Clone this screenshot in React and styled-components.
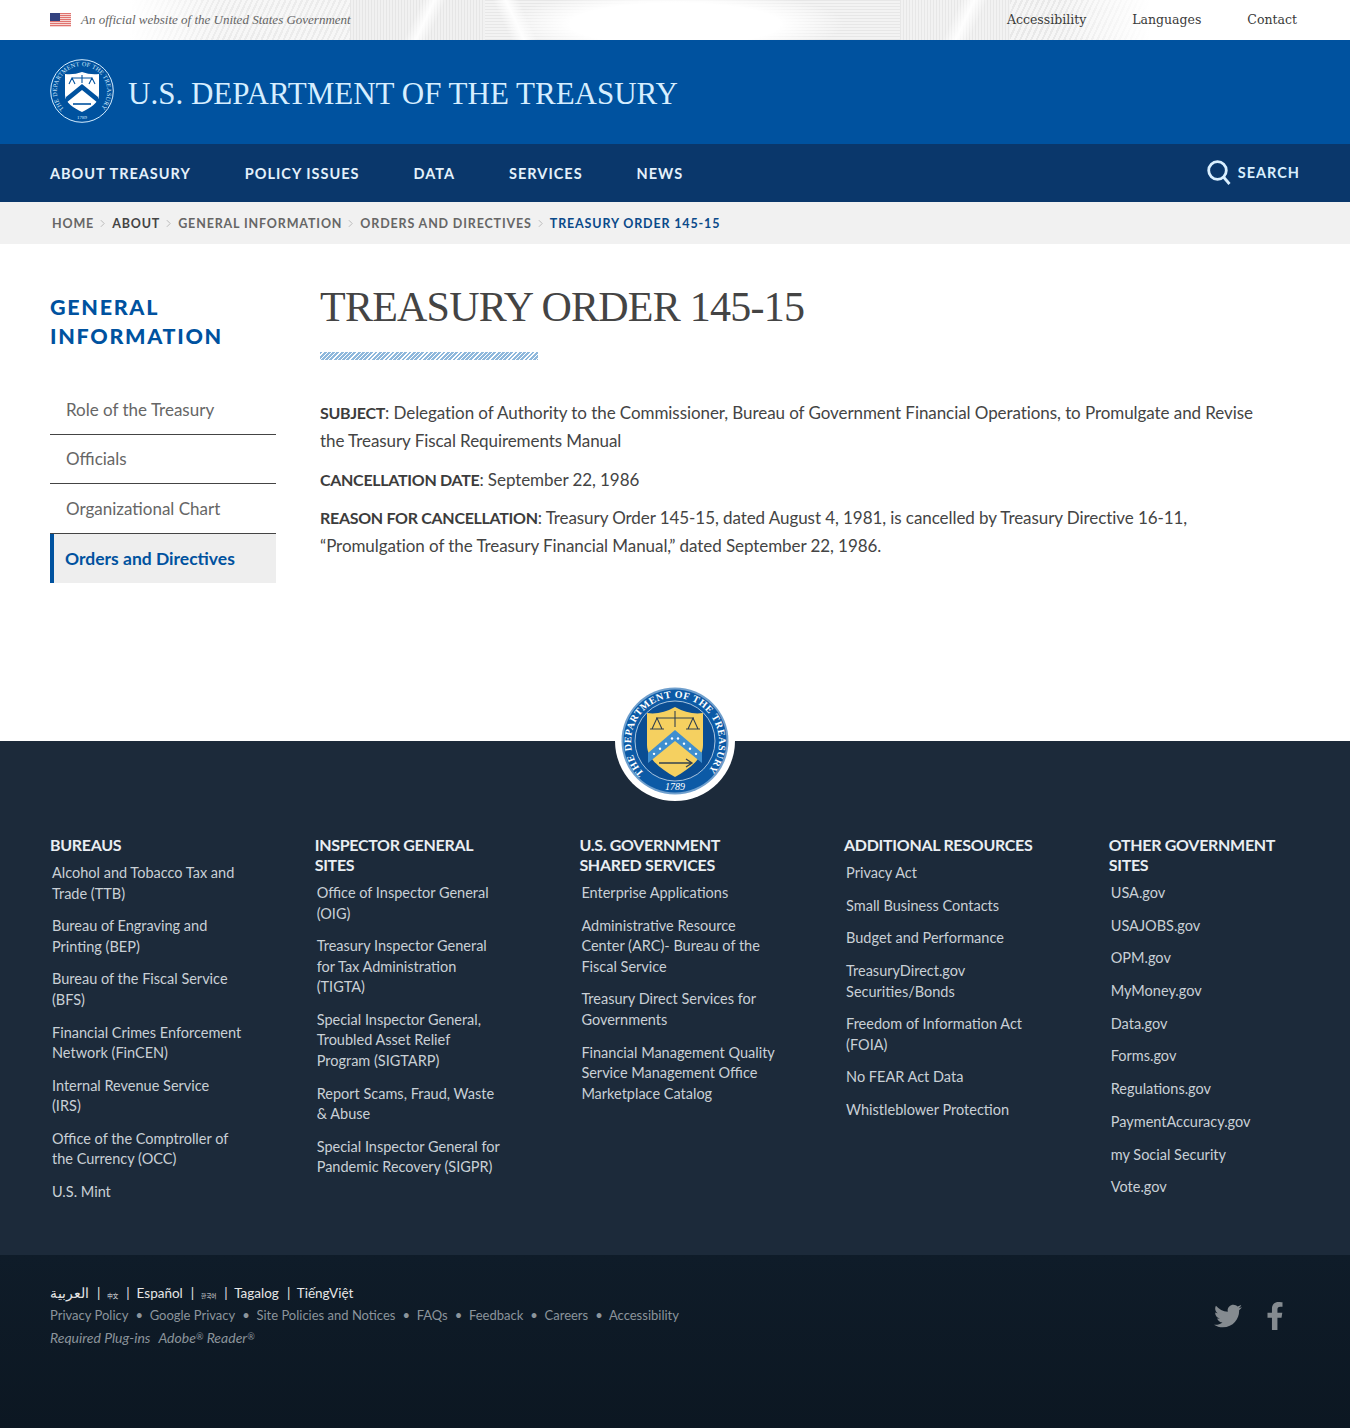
import styled, { createGlobalStyle } from "styled-components";
import { FaTwitter, FaFacebookF } from "react-icons/fa";

const sans = `"Lato", "Open Sans", sans-serif`;
const serif = `"Liberation Serif", serif`;

const GlobalStyle = createGlobalStyle`
    * {
        box-sizing: border-box;
    }

    body {
        margin: 0;
        background: #ffffff;
        color: #444444;
        font-family: ${sans};
    }

    a {
        color: inherit;
        text-decoration: none;
    }

    ul {
        list-style: none;
        margin: 0;
        padding: 0;
    }
`;

const TopBar = styled.div`
    height: 40px;
    padding: 0 53px 0 50px;
    display: flex;
    justify-content: space-between;
    align-items: center;
    background-color: #ffffff;
    background-repeat: no-repeat;
    background-image:
        radial-gradient(ellipse 170px 34px at 50% 60%, #ffffff 62%, rgba(255, 255, 255, 0) 100%),
        linear-gradient(115deg, rgba(255, 255, 255, 0) 35%, rgba(255, 255, 255, 0.95) 50%, rgba(255, 255, 255, 0) 65%),
        linear-gradient(65deg, rgba(255, 255, 255, 0) 35%, rgba(255, 255, 255, 0.95) 50%, rgba(255, 255, 255, 0) 65%),
        linear-gradient(115deg, rgba(255, 255, 255, 0) 35%, rgba(255, 255, 255, 0.95) 50%, rgba(255, 255, 255, 0) 65%),
        linear-gradient(90deg, #ffffff, rgba(255, 255, 255, 0)),
        linear-gradient(270deg, #ffffff, rgba(255, 255, 255, 0)),
        repeating-linear-gradient(90deg, #e6e6e6 0 1px, #f1f1f1 1px 3px),
        repeating-linear-gradient(0deg, #e7e7e7 0 1px, #f3f3f3 1px 3px),
        repeating-linear-gradient(90deg, #e7e7e7 0 1px, #f2f2f2 1px 3px),
        repeating-linear-gradient(115deg, #e9e9e9 0 2px, #f6f6f6 2px 5px),
        repeating-linear-gradient(115deg, #ececec 0 2px, #f7f7f7 2px 5px);
    background-size:
        100% 100%,
        60px 40px,
        70px 40px,
        70px 40px,
        90px 40px,
        90px 40px,
        135px 40px,
        415px 40px,
        110px 40px,
        140px 40px,
        220px 40px;
    background-position:
        0 0,
        395px 0,
        480px 0,
        930px 0,
        130px 0,
        1060px 0,
        350px 0,
        485px 0,
        900px 0,
        1010px 0,
        130px 0;
`;

const Official = styled.div`
    display: flex;
    align-items: center;
    gap: 10px;
    font: italic 13px ${serif};
    color: #666666;
`;

const TopLinks = styled.nav`
    display: flex;
    gap: 46px;
    padding-bottom: 2px;
    font: 12.5px "DejaVu Serif", serif;
    color: #3a3a3a;
`;

const Masthead = styled.header`
    height: 104px;
    padding: 0 50px 3px;
    background: #00529f;
    display: flex;
    align-items: center;
    gap: 14px;
`;

const SiteName = styled.a`
    font: 31px ${serif};
    color: #d6eeff;
    padding-top: 7px;
    white-space: nowrap;
`;

const MainNav = styled.nav`
    height: 58px;
    padding: 0 50px 2px;
    background: #0a376b;
    display: flex;
    justify-content: space-between;
    align-items: center;
`;

const NavList = styled.ul`
    display: flex;
    gap: 54px;
`;

const NavLink = styled.a`
    font-size: 14.5px;
    font-weight: 700;
    letter-spacing: 1px;
    color: #e4f1fb;
    white-space: nowrap;
`;

const SearchButton = styled.a`
    display: flex;
    align-items: center;
    gap: 7px;
    color: #d9efff;
    font-size: 14.5px;
    font-weight: 700;
    letter-spacing: 1px;
`;

const Breadcrumbs = styled.ol`
    height: 42px;
    margin: 0;
    padding: 0 52px;
    list-style: none;
    background: #f1f1f1;
    display: flex;
    align-items: center;
    font-size: 12.5px;
    font-weight: 700;
    letter-spacing: 0.85px;
    text-transform: uppercase;
`;

const Crumb = styled.li`
    display: flex;
    align-items: center;
    color: ${({ $tone }) => $tone || "#666666"};
    white-space: nowrap;
`;

const CrumbArrow = styled.svg`
    width: 5px;
    height: 9px;
    margin: 0 7px 0 6px;
    fill: none;
    stroke: #bbbbbb;
    stroke-width: 1.2;
`;

const Main = styled.main`
    height: 497px;
    padding: 35px 50px 0;
    display: grid;
    grid-template-columns: 226px 1fr;
    column-gap: 44px;
`;

const SideTitle = styled.h2`
    margin: 14px 0 34px;
    font-size: 21.5px;
    line-height: 29px;
    font-weight: 900;
    letter-spacing: 1.7px;
    text-transform: uppercase;
    color: #00529f;
`;

const SideItem = styled.li`
    height: ${({ $active }) => ($active ? "49px" : "49.5px")};
    display: flex;
    align-items: center;
    padding-left: ${({ $active }) => ($active ? "11px" : "16px")};
    font-size: ${({ $active }) => ($active ? "17.5px" : "17px")};
    font-weight: ${({ $active }) => ($active ? 700 : 400)};
    color: ${({ $active }) => ($active ? "#00529f" : "#666666")};
    background: ${({ $active }) => ($active ? "#eeeeee" : "transparent")};
    border-left: ${({ $active }) => ($active ? "4px solid #00529f" : "0")};
    border-bottom: ${({ $active }) => ($active ? "0" : "1px solid #444444")};
`;

const Title = styled.h1`
    margin: 0;
    font: 42px/56px ${serif};
    letter-spacing: -0.76px;
    color: #444444;
    text-transform: uppercase;
`;

const TitleRule = styled.div`
    width: 218px;
    height: 8px;
    margin: 17px 0 39px;
    background: repeating-linear-gradient(135deg, #8fb8dc 0 2px, #ffffff 2px 3px);
`;

const Para = styled.p`
    max-width: 958px;
    margin: 0 0 10.5px;
    font-size: 17px;
    line-height: 28px;
    letter-spacing: -0.07px;
    color: #444444;

    strong {
        font-size: 16px;
        letter-spacing: -0.3px;
        color: #3c3c3c;
    }
`;

const SealHolder = styled.div`
    position: absolute;
    left: 50%;
    top: -60px;
    width: 120px;
    height: 120px;
    margin-left: -60px;
    border-radius: 50%;
    background: #ffffff;
    display: flex;
    align-items: center;
    justify-content: center;
`;

const FooterTop = styled.footer`
    position: relative;
    height: 514px;
    padding: 94px 0 0 50px;
    background: #1c2a3a;
    display: grid;
    grid-template-columns: repeat(5, 264.7px);
`;

const ColTitle = styled.h3`
    width: 200px;
    margin: 0;
    font-size: 16px;
    line-height: 20px;
    font-weight: 700;
    letter-spacing: -0.3px;
    color: #e9eef2;
`;

const ColList = styled.ul`
    width: 200px;
    margin-left: 2px;
`;

const ColItem = styled.li`
    font-size: 14.5px;
    line-height: 20.5px;
    white-space: pre-line;
    color: #c9d0d6;
    padding-top: 8px;
    margin-bottom: 4.2px;
`;

const FooterBottom = styled.div`
    height: 173px;
    padding: 27px 50px 0;
    background: linear-gradient(#0f1c29, #0c1722);
    display: flex;
    justify-content: space-between;
`;

const Row = styled.div`
    height: 22px;
    display: flex;
    align-items: center;
    gap: ${({ $gap }) => $gap};
    font-size: ${({ $size }) => $size};
    font-style: ${({ $italic }) => ($italic ? "italic" : "normal")};
    color: ${({ $light }) => ($light ? "#e6e6e6" : "#8b949b")};
    white-space: nowrap;
`;

const TinyLang = styled.span`
    font-family: "Noto Sans CJK KR", sans-serif;
    font-size: 5.5px;
`;

const Reg = styled.span`
    font-size: 9px;
    vertical-align: 3px;
`;

const Socials = styled.div`
    display: flex;
    align-items: center;
    gap: 19px;
    height: 68px;
    margin-right: 11px;
    color: #858b90;
`;

const Flag = () => (
    <svg width="21" height="15" viewBox="0 0 21 15">
        <rect width="21" height="15" fill="#ffffff" />
        {[0, 2, 4, 6, 8, 10, 12].map((y) => (
            <rect key={y} y={y} width="21" height="1.3" fill="#e0736f" />
        ))}
        <rect width="10" height="8" fill="#33427f" />
    </svg>
);

const SmallSeal = () => (
    <svg width="64" height="64" viewBox="0 0 64 64">
        <defs>
            <path id="small-ring" d="M14 50 A25.2 25.2 0 1 1 50 50" />
        </defs>
        <circle cx="32" cy="32" r="31.3" fill="none" stroke="#d6eeff" strokeWidth="1" />
        <text fontSize="6.2" fill="#d6eeff" fontFamily="Liberation Serif, serif">
            <textPath href="#small-ring" textLength="116">THE DEPARTMENT OF THE TREASURY</textPath>
        </text>
        <text x="32" y="60" textAnchor="middle" fontSize="5" fill="#d6eeff" fontFamily="Liberation Serif, serif">1789</text>
        <path d="M15 15 q9 1 17 -2 q8 3 17 2 v21 c0 8 -9 13 -17 17 c-8 -4 -17 -9 -17 -17 z" fill="#ffffff" />
        <path d="M16 38 L32 25 L48 38 L48 44 L32 31 L16 44 Z" fill="#00529f" />
        <path d="M22 19 h20 M32 16 v8 M19 25 l3 -6 l3 6 M39 25 l3 -6 l3 6" stroke="#00529f" strokeWidth="1.1" fill="none" />
        <path d="M23 45 h18" stroke="#00529f" strokeWidth="1.6" />
    </svg>
);

const BigSeal = () => (
    <svg width="108" height="108" viewBox="0 0 108 108">
        <defs>
            <path id="big-ring" d="M23 86 A44 44 0 1 1 85 86" />
        </defs>
        <circle cx="54" cy="54" r="53.5" fill="#6f9fcd" />
        <circle cx="54" cy="54" r="51.5" fill="#0c5aa6" />
        <circle cx="54" cy="54" r="40" fill="#0a4d93" stroke="#cfe0ef" strokeWidth="0.8" />
        <text fontSize="10" fill="#ffffff" fontFamily="Liberation Serif, serif" fontWeight="700">
            <textPath href="#big-ring" textLength="204">THE DEPARTMENT OF THE TREASURY</textPath>
        </text>
        <text x="54" y="103" textAnchor="middle" fontSize="10" fontStyle="italic" fill="#ffffff" fontFamily="Liberation Serif, serif">1789</text>
        <path d="M26 26 q14 2 28 -6 q14 8 28 6 v32 c0 14 -14 24 -28 32 c-14 -8 -28 -18 -28 -32 z" fill="#f5d060" />
        <path d="M27 66 L54 43 L81 66 L81 76 L54 54 L27 76 Z" fill="#3f8fd0" />
        {[33, 39, 45, 51, 57, 63, 69, 75].map((x) => (
            <circle key={x} cx={x} cy={49 + Math.abs(x - 54) * 0.85} r="1.2" fill="#ffffff" />
        ))}
        <path d="M35 31 h38 M54 24 v16 M31 42 l5 -11 l5 11 M67 42 l5 -11 l5 11 M29 42 h14 M65 42 h14" stroke="#33414f" strokeWidth="1.1" fill="none" />
        <path d="M38 76 h32 M65 72 l6 4 l-6 4" stroke="#33414f" strokeWidth="1.3" fill="none" />
    </svg>
);

const navItems = ["ABOUT TREASURY", "POLICY ISSUES", "DATA", "SERVICES", "NEWS"];

const crumbs = [
    { label: "Home" },
    { label: "About", tone: "#444444" },
    { label: "General Information" },
    { label: "Orders and Directives" },
    { label: "Treasury Order 145-15", tone: "#0a4a8a" },
];

const sideItems = ["Role of the Treasury", "Officials", "Organizational Chart"];

const footerColumns = [
    {
        title: "BUREAUS",
        links: [
            "Alcohol and Tobacco Tax and\nTrade (TTB)",
            "Bureau of Engraving and\nPrinting (BEP)",
            "Bureau of the Fiscal Service\n(BFS)",
            "Financial Crimes Enforcement\nNetwork (FinCEN)",
            "Internal Revenue Service\n(IRS)",
            "Office of the Comptroller of\nthe Currency (OCC)",
            "U.S. Mint",
        ],
    },
    {
        title: "INSPECTOR GENERAL SITES",
        links: [
            "Office of Inspector General\n(OIG)",
            "Treasury Inspector General\nfor Tax Administration\n(TIGTA)",
            "Special Inspector General,\nTroubled Asset Relief\nProgram (SIGTARP)",
            "Report Scams, Fraud, Waste\n& Abuse",
            "Special Inspector General for\nPandemic Recovery (SIGPR)",
        ],
    },
    {
        title: "U.S. GOVERNMENT SHARED SERVICES",
        links: [
            "Enterprise Applications",
            "Administrative Resource\nCenter (ARC)- Bureau of the\nFiscal Service",
            "Treasury Direct Services for\nGovernments",
            "Financial Management Quality\nService Management Office\nMarketplace Catalog",
        ],
    },
    {
        title: "ADDITIONAL RESOURCES",
        links: [
            "Privacy Act",
            "Small Business Contacts",
            "Budget and Performance",
            "TreasuryDirect.gov\nSecurities/Bonds",
            "Freedom of Information Act\n(FOIA)",
            "No FEAR Act Data",
            "Whistleblower Protection",
        ],
    },
    {
        title: "OTHER GOVERNMENT SITES",
        links: [
            "USA.gov",
            "USAJOBS.gov",
            "OPM.gov",
            "MyMoney.gov",
            "Data.gov",
            "Forms.gov",
            "Regulations.gov",
            "PaymentAccuracy.gov",
            "my Social Security",
            "Vote.gov",
        ],
    },
];

const languages = [
    { label: "العربية" },
    { label: "中文", tiny: true },
    { label: "Español" },
    { label: "한국어", tiny: true },
    { label: "Tagalog" },
    { label: "TiếngViệt" },
];
const policies = ["Privacy Policy", "Google Privacy", "Site Policies and Notices", "FAQs", "Feedback", "Careers", "Accessibility"];

export default function App() {
    return (
        <>
            <GlobalStyle />
            <TopBar>
                <Official>
                    <Flag />
                    An official website of the United States Government
                </Official>
                <TopLinks>
                    <a href="#a">Accessibility</a>
                    <a href="#l">Languages</a>
                    <a href="#c">Contact</a>
                </TopLinks>
            </TopBar>
            <Masthead>
                <SmallSeal />
                <SiteName href="#home">U.S. DEPARTMENT OF THE TREASURY</SiteName>
            </Masthead>
            <MainNav>
                <NavList>
                    {navItems.map((item) => (
                        <li key={item}>
                            <NavLink href="#nav">{item}</NavLink>
                        </li>
                    ))}
                </NavList>
                <SearchButton href="#search">
                    <svg width="24" height="25" viewBox="0 0 24 25" fill="none" stroke="currentColor" strokeWidth="2.8">
                        <circle cx="10.5" cy="10.5" r="8.8" />
                        <path d="M16.5 17 L22.5 24" />
                    </svg>
                    SEARCH
                </SearchButton>
            </MainNav>
            <Breadcrumbs>
                {crumbs.map(({ label, tone }, i) => (
                    <Crumb key={label} $tone={tone}>
                        {label}
                        {i < crumbs.length - 1 && (
                            <CrumbArrow viewBox="0 0 6 10">
                                <path d="M1 1 L5 5 L1 9" />
                            </CrumbArrow>
                        )}
                    </Crumb>
                ))}
            </Breadcrumbs>
            <Main>
                <aside>
                    <SideTitle>General Information</SideTitle>
                    <ul>
                        {sideItems.map((item) => (
                            <SideItem key={item}>{item}</SideItem>
                        ))}
                        <SideItem $active>Orders and Directives</SideItem>
                    </ul>
                </aside>
                <article>
                    <Title>Treasury Order 145-15</Title>
                    <TitleRule />
                    <Para>
                        <strong>SUBJECT</strong>: Delegation of Authority to the Commissioner, Bureau of Government Financial Operations, to Promulgate and Revise the Treasury Fiscal Requirements Manual
                    </Para>
                    <Para>
                        <strong>CANCELLATION DATE</strong>: September 22, 1986
                    </Para>
                    <Para>
                        <strong>REASON FOR CANCELLATION</strong>: Treasury Order 145-15, dated August 4, 1981, is cancelled by Treasury Directive 16-11, “Promulgation of the Treasury Financial Manual,” dated September 22, 1986.
                    </Para>
                </article>
            </Main>
            <FooterTop>
                <SealHolder>
                    <BigSeal />
                </SealHolder>
                {footerColumns.map(({ title, links }) => (
                    <div key={title}>
                        <ColTitle>{title}</ColTitle>
                        <ColList>
                            {links.map((link) => (
                                <ColItem key={link}>{link}</ColItem>
                            ))}
                        </ColList>
                    </div>
                ))}
            </FooterTop>
            <FooterBottom>
                <div>
                    <Row $light $size="13.5px" $gap="8px">
                        {languages.map(({ label, tiny }, i) => (
                            <span key={label}>
                                {i > 0 && "|\u00a0\u00a0"}
                                {tiny ? <TinyLang>{label}</TinyLang> : label}
                            </span>
                        ))}
                    </Row>
                    <Row $size="13px" $gap="7px">
                        {policies.map((item, i) => (
                            <span key={item}>
                                {i > 0 && "•\u00a0\u00a0"}
                                {item}
                            </span>
                        ))}
                    </Row>
                    <Row $italic $size="14px" $gap="8px">
                        <span>Required Plug-ins</span>
                        <span>
                            Adobe<Reg>®</Reg> Reader<Reg>®</Reg>
                        </span>
                    </Row>
                </div>
                <Socials>
                    <FaTwitter size={28} />
                    <FaFacebookF size={28} />
                </Socials>
            </FooterBottom>
        </>
    );
}
